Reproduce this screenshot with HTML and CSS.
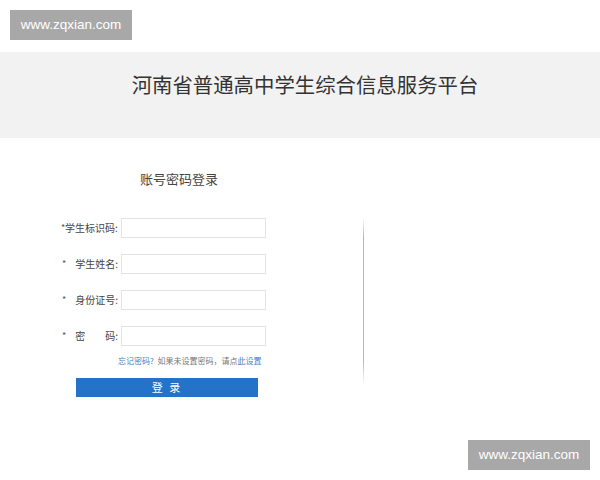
FILE: index.html
```html
<!DOCTYPE html>
<html lang="zh-CN">
<head>
<meta charset="utf-8">
<title>河南省普通高中学生综合信息服务平台</title>
<link rel="stylesheet" href="styles.css">
</head>
<body>
<div class="watermark wm-top">www.zqxian.com</div>
<header class="banner">
  <h1 class="banner-title">河南省普通高中学生综合信息服务平台</h1>
</header>
<main class="login">
  <section class="form">
    <h2 class="heading">账号密码登录</h2>
    <div class="rows">
      <div class="row">
        <label class="label label-tight"><span class="star">*</span>学生标识码:</label>
        <span class="input"></span>
      </div>
      <div class="row">
        <label class="label"><span class="star">*</span><span class="name">学生姓名:</span></label>
        <span class="input"></span>
      </div>
      <div class="row">
        <label class="label"><span class="star">*</span><span class="name">身份证号:</span></label>
        <span class="input"></span>
      </div>
      <div class="row">
        <label class="label"><span class="star">*</span><span class="name">密　　码:</span></label>
        <span class="input"></span>
      </div>
    </div>
    <p class="links"><span class="blue">忘记密码?</span>&nbsp; 如果未设置密码，请点<span class="blue">此设置</span></p>
    <div class="button">登 录</div>
  </section>
  <div class="divider"></div>
</main>
<div class="watermark wm-bottom">www.zqxian.com</div>
</body>
</html>
```
FILE: styles.css
```css
html, body {
  margin: 0;
  padding: 0;
  background: #ffffff;
}
body {
  width: 600px;
  height: 480px;
  overflow: hidden;
  position: relative;
  font-family: "Noto Sans CJK SC", "Noto Sans", sans-serif;
  color: #444;
}
.watermark {
  position: absolute;
  width: 122px;
  height: 30px;
  background: #a8a8a8;
  color: #ffffff;
  font-family: "Liberation Sans", Arial, sans-serif;
  font-size: 13.5px;
  line-height: 30px;
  text-align: center;
}
.wm-top { left: 10px; top: 10px; }
.wm-bottom { left: 468px; top: 440px; }

.banner {
  margin-top: 52px;
  height: 86px;
  background: #f2f2f2;
  box-sizing: border-box;
  padding-top: 19px;
}
.banner-title {
  margin: 0;
  text-align: center;
  font-size: 20.4px;
  line-height: 26px;
  font-weight: normal;
  color: #333;
  padding-left: 10px;
}
.login {
  display: flex;
  padding-left: 60px;
}
.form {
  width: 206px;
}
.heading {
  margin: 33px 0 0 80px;
  font-size: 13px;
  line-height: 16px;
  font-weight: normal;
  color: #444;
}
.rows {
  margin-top: 31px;
  display: flex;
  flex-direction: column;
  gap: 16px;
}
.row {
  display: flex;
  align-items: center;
  height: 20px;
}
.label {
  width: 58px;
  margin-right: 3px;
  display: flex;
  font-size: 10px;
  line-height: 20px;
  color: #444;
  white-space: nowrap;
}
.label .star {
  width: 12px;
  color: #555;
  font-size: 9px;
  padding-left: 2px;
  box-sizing: border-box;
}
.label-tight .star {
  width: 5px;
  padding-left: 1px;
}
.label .name {
  flex: 1;
  text-align: right;
}
.input {
  width: 145px;
  height: 20px;
  box-sizing: border-box;
  border: 1px solid #e3e3e3;
  background: #fff;
}
.links {
  margin: 5px 0 0 58px;
  font-size: 8px;
  line-height: 20px;
  color: #777;
  white-space: nowrap;
}
.blue {
  color: #3f7fc4;
}
.button {
  margin: 7px 0 0 16px;
  width: 182px;
  height: 19px;
  background: #2572c9;
  color: #fff;
  font-size: 11px;
  line-height: 19px;
  text-align: center;
  letter-spacing: 2px;
}
.divider {
  width: 1px;
  height: 168px;
  margin: 79px 0 0 97px;
  background: linear-gradient(to bottom, rgba(180,180,180,0), #b5b5b5 12%, #b5b5b5 85%, rgba(180,180,180,0));
}
```
